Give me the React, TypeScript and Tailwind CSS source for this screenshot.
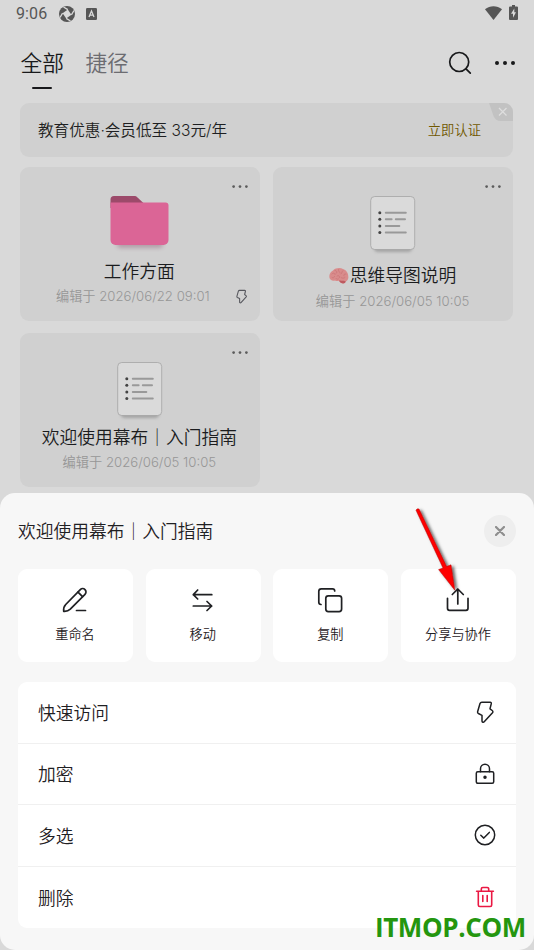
import React from "react";

interface IDoc {
  title: string;
  date: string;
  type: "folder" | "doc";
  emoji?: boolean;
  pinned?: boolean;
}

const docs: IDoc[] = [
  { title: "工作方面", date: "2026/06/22 09:01", type: "folder", pinned: true },
  {
    title: "思维导图说明",
    date: "2026/06/05 10:05",
    type: "doc",
    emoji: true,
  },
  { title: "欢迎使用幕布｜入门指南", date: "2026/06/05 10:05", type: "doc" },
];

const BoltIcon = ({ className }: { className: string }) => (
  <svg
    className={className}
    viewBox="0 0 24 24"
    fill="none"
    stroke="currentColor"
    strokeLinejoin="round"
  >
    <path d="M8.800 2.200h8.400c.8 0 1.300.6 1.100 1.400L17 8.800l2.200 1.700c.8.6.9 1.500.3 2.200L11.200 21.800c-.8.9-2.200.4-2.200-.8v-5.700l-3.600-1.800c-.7-.4-1-1-.8-1.800L7 3.500c.3-.8.9-1.300 1.800-1.300z" />
  </svg>
);

const Dots = ({ className, r = 2 }: { className: string; r?: number }) => (
  <svg className={className} viewBox="0 0 20 4" fill="currentColor">
    <circle cx="2" cy="2" r={r} />
    <circle cx="10" cy="2" r={r} />
    <circle cx="18" cy="2" r={r} />
  </svg>
);

const FolderIcon = () => (
  <svg className="w-[60px] h-[56px]" viewBox="0 0 60 56">
    <defs>
      <filter id="folderShadow" x="-20%" y="-20%" width="140%" height="150%">
        <feGaussianBlur stdDeviation="2.2" />
      </filter>
    </defs>
    <rect
      x="7"
      y="38"
      width="46"
      height="14"
      rx="4"
      fill="#8d6076"
      opacity=".45"
      filter="url(#folderShadow)"
    />
    <path
      d="M.5 12V3.500A3.500 3.500 0 0 1 4 0H24c1.500 0 2.500.5 3.500 1.400L35 8.500V12z"
      fill="#9c4a6a"
    />
    <path
      d="M.5 6.500h55a3 3 0 0 1 3 3V44a5 5 0 0 1-5 5h-48a5 5 0 0 1-5-5z"
      fill="#db6596"
    />
  </svg>
);

const DocIcon = () => (
  <svg className="w-[56px] h-[62px]" viewBox="0 0 56 62">
    <defs>
      <filter id="docShadow" x="-20%" y="-60%" width="140%" height="240%">
        <feGaussianBlur stdDeviation="1.8" />
      </filter>
    </defs>
    <rect
      x="9"
      y="43"
      width="38"
      height="13"
      rx="4"
      fill="#777"
      opacity=".5"
      filter="url(#docShadow)"
    />
    <rect
      x="5.700"
      y=".5"
      width="44"
      height="53"
      rx="4"
      fill="#dadada"
      stroke="#a3a3a3"
      strokeWidth=".8"
    />
    <g fill="#444">
      <circle cx="14.800" cy="16.700" r="1.500" />
      <circle cx="14.800" cy="23.300" r="1.500" />
      <circle cx="14.800" cy="29.900" r="1.500" />
      <circle cx="14.800" cy="36.500" r="1.500" />
    </g>
    <g stroke="#999" strokeWidth="2" strokeLinecap="round">
      <path d="M20.800 16.700h20M20.800 23.300h5.800M30.800 23.300h9.200M20.800 29.900h13.500M20.800 36.500h20" />
    </g>
  </svg>
);

const BrainIcon = () => (
  <svg className="w-[20px] h-[18px] mr-px" viewBox="0 0 20 18" fill="none">
    <path
      d="M.4 10.500C0 7 2 4.500 4 3.500 6.500 1 11 .4 14 2c3 1 5.300 4 5.300 7.200.5 2.500-.8 4.600-2.500 5.300-.5 1.800-2.600 2.500-4.500 1.500-1-.4-1.800-1.400-2.300-2.300-1.500.5-3 .4-4-.3-2.500.8-5.300-.5-5.600-2.900z"
      fill="#d98c8c"
    />
    <path
      d="M10 13.600c2 .3 4.500-.3 6.800.9-.5 1.800-2.600 2.500-4.500 1.500-1-.4-1.800-1.400-2.300-2.400z"
      fill="#bd5a60"
    />
    <path
      d="M3 7c1-1.500 3-1 3 .5M6 3.500c2 0 2.500 2 1 3M9.500 2.500c-.5 2 1.500 2 1.500 3.500M14 3.500c-1.500 1-.5 2.500-2 3.500M17 7c-2-.5-2.500 1-2 2M3 10.500c1 1 2.500 0 2.500-1M8 9c1.500-1 3 0 2.500 1.500M12 10.500c1 1 3 1 4 0M7 11.500c.5 1 2 1 2.500.5"
      stroke="#c97174"
      strokeWidth=".7"
      strokeLinecap="round"
    />
  </svg>
);

const DocCard = ({ doc }: { doc: IDoc }) => (
  <div className="relative h-[153.500px] rounded-[9px] bg-[#d0d0d0] pt-[29px] flex flex-col items-center">
    <Dots
      r={1.700}
      className="absolute top-[18px] right-[12px] w-[16px] h-[3.200px] text-[#5c5c5c]"
    />
    <div className={doc.emoji ? "h-[68px]" : "h-[64px]"}>
      {doc.type === "folder" ? <FolderIcon /> : <DocIcon />}
    </div>
    <div className="flex items-center h-[24px] pr-px text-[17.750px] leading-[24px] text-[#1b1c1e] whitespace-nowrap">
      {doc.emoji && <BrainIcon />}
      {doc.title}
    </div>
    <div
      className={`text-[13.200px] leading-[20px] text-[#979797] whitespace-nowrap ${
        doc.emoji ? "mt-[3px]" : "mt-[2px]"
      } ${doc.pinned ? "mr-[14px]" : "mr-px"}`}
    >
      编辑于 {doc.date}
    </div>
    {doc.pinned && (
      <BoltIcon className="absolute bottom-[17px] right-[11px] w-[15px] h-[15px] text-[#55565c] stroke-[1.700]" />
    )}
  </div>
);

const iconProps = {
  fill: "none",
  stroke: "currentColor",
  strokeWidth: 1.7,
  strokeLinecap: "round" as const,
  strokeLinejoin: "round" as const,
};

const actions = [
  {
    label: "重命名",
    icon: (
      <svg className="w-[28px] h-[28px]" viewBox="0 0 28 28" {...iconProps}>
        <path d="M2.700 25.300c-.3-2.500.3-5 2-6.800L19.300 3.600a3.300 3.300 0 0 1 4.700 4.700L9.300 23.200c-1.800 1.700-4.100 2.300-6.600 2.100z" />
        <path d="M17 6.200l4.500 4.500M15.500 24.500h9" />
      </svg>
    ),
  },
  {
    label: "移动",
    icon: (
      <svg className="w-[28px] h-[28px]" viewBox="0 0 28 28" {...iconProps}>
        <path d="M8.700 4L4.300 8.700l4.400 4.300M4.300 8.700h18.500M18 15.500l4.700 4.500-4.700 4.500M22.700 20H4.300" />
      </svg>
    ),
  },
  {
    label: "复制",
    icon: (
      <svg className="w-[28px] h-[28px]" viewBox="0 0 28 28" {...iconProps}>
        <rect x="9.800" y="9.800" width="15.800" height="15.800" rx="2.500" />
        <path d="M5 18.500c-1.300 0-2.200-.8-2.200-2.200v-11A2.500 2.500 0 0 1 5.300 2.800h11.200c1.300 0 2.200.8 2.200 2.200" />
      </svg>
    ),
  },
  {
    label: "分享与协作",
    icon: (
      <svg className="w-[28px] h-[28px]" viewBox="0 0 28 28" {...iconProps}>
        <path d="M3.500 12.300v10a2 2 0 0 0 2 2H22a2 2 0 0 0 2-2v-10M13.800 18V3M8.300 8.500L13.800 3l5.500 5.500" />
      </svg>
    ),
  },
];

const rows = [
  {
    label: "快速访问",
    icon: <BoltIcon className="w-[24px] h-[24px] stroke-[1.500]" />,
  },
  {
    label: "加密",
    icon: (
      <svg
        className="w-[24px] h-[24px]"
        viewBox="0 0 24 24"
        {...iconProps}
        strokeWidth={1.5}
      >
        <rect x="3.300" y="9.800" width="17.400" height="11.500" rx="1.500" />
        <path d="M7.500 9.800V6.800a4.500 4.500 0 0 1 9 0v3" />
        <circle cx="12" cy="15.300" r="1" fill="currentColor" />
      </svg>
    ),
  },
  {
    label: "多选",
    icon: (
      <svg
        className="w-[24px] h-[24px]"
        viewBox="0 0 24 24"
        {...iconProps}
        strokeWidth={1.5}
      >
        <circle cx="12" cy="12" r="9.700" />
        <path d="M7.800 12.300l3 2.800 5.500-5.700" />
      </svg>
    ),
  },
  {
    label: "删除",
    icon: (
      <svg
        className="w-[24px] h-[24px] text-[#ea1843]"
        viewBox="0 0 24 24"
        {...iconProps}
        strokeWidth={1.6}
      >
        <path d="M3.600 6.200h16.800M5.300 6.200V20a1.500 1.500 0 0 0 1.500 1.500h10.400a1.500 1.500 0 0 0 1.500-1.500V6.200M8.300 6V4a1.500 1.500 0 0 1 1.500-1.500h4.400A1.500 1.500 0 0 1 15.700 4v2M9.800 10.500v6M14.200 10.500v6" />
      </svg>
    ),
  },
];

const StatusBar = () => (
  <div className="flex items-center h-[28px] pl-[16px] pr-[16px] text-[#565656]">
    <span className="font-['Roboto'] font-normal text-[16px] leading-[28px] tracking-[.1px]">
      9:06
    </span>
    <svg className="w-[16px] h-[16px] ml-[12px]" viewBox="0 0 16 16">
      <circle cx="8" cy="8" r="8" fill="currentColor" />
      <path d="M8.800 3.600l3.600 5.200-5.200 3.600L3.600 7.200z" fill="#d9d9d9" />
      <path
        d="M8.800 3.600L4.500 1M12.400 8.800L15 4.500M7.200 12.400l4.300 2.600M3.600 7.200L1 11.500"
        stroke="#d9d9d9"
        strokeWidth="1.300"
      />
    </svg>
    <svg className="w-[11px] h-[12px] ml-[11px]" viewBox="0 0 11 12">
      <rect width="11" height="12" rx="1.300" fill="currentColor" />
      <path
        d="M3 9l2.500-6L8 9M4 7.200h3"
        fill="none"
        stroke="#d9d9d9"
        strokeWidth="1.300"
      />
    </svg>
    <svg className="w-[17px] h-[15px] ml-auto -mt-[2px]" viewBox="0 0 17 15">
      <path d="M0 3.200C5-.8 12-.8 17 3.200L8.500 14z" fill="currentColor" />
    </svg>
    <svg className="w-[9px] h-[15px] ml-[7.500px] -mt-[3px]" viewBox="0 0 9 15">
      <path
        d="M3 0h3v1.500h2a1 1 0 0 1 1 1V14a1 1 0 0 1-1 1H1a1 1 0 0 1-1-1V2.500a1 1 0 0 1 1-1h2z"
        fill="currentColor"
      />
      <path d="M5.300 3.500L2 8.800h2v4l3-5.500H5.300z" fill="#d9d9d9" />
    </svg>
  </div>
);

const App = () => {
  return (
    <div className="relative w-[534px] h-[950px] overflow-hidden bg-[#d9d9d9] font-['Inter','Noto_Sans_CJK_SC',sans-serif] font-[350] flex flex-col">
      <StatusBar />

      <div className="h-[75px] pl-[20.500px] pr-[19.500px] flex items-start">
        <div className="flex flex-col items-center pt-[19px]">
          <span className="text-[21.700px] leading-[32px] text-[#18191b]">
            全部
          </span>
          <span className="w-[20px] h-[2px] mt-[8px] bg-[#18191b] rounded-full" />
        </div>
        <span className="ml-[21.500px] pt-[19px] text-[21.700px] leading-[32px] text-[#6c6c71]">
          捷径
        </span>
        <svg
          className="w-[24px] h-[24px] ml-auto mt-[23px] text-[#18191b]"
          viewBox="0 0 24 24"
          {...iconProps}
        >
          <circle cx="11.200" cy="11" r="9.500" />
          <path d="M18 17.800l4.300 4.300" />
        </svg>
        <Dots className="w-[20px] h-[4px] mt-[33px] ml-[23px] text-[#18191b]" />
      </div>

      <div className="relative mx-[20px] mr-[21px] h-[54px] shrink-0 overflow-hidden rounded-[9px] bg-[#d0d0d0] flex items-center justify-between pl-[18px] pr-[32px]">
        <span className="pt-[2px] text-[15.600px] text-[#1e1f22]">
          教育优惠·会员低至 33元/年
        </span>
        <span className="pt-px text-[13.300px] text-[#705800]">立即认证</span>
        <svg
          className="absolute top-0 right-0 w-[24px] h-[18px]"
          viewBox="0 0 24 18"
        >
          <path d="M0 0h24v18H12c-4 0-6.300-2-7.500-5z" fill="#c2c2c2" />
          <path
            d="M10 5l7.500 7.500M17.500 5L10 12.500"
            stroke="#dedede"
            strokeWidth="1.200"
          />
        </svg>
      </div>

      <div className="ml-[20px] mr-[21px] mt-[10px] grid grid-cols-2 gap-x-[13.500px] gap-y-[12.500px]">
        {docs.map((doc) => (
          <DocCard key={doc.title} doc={doc} />
        ))}
      </div>

      {/* action sheet */}
      <div className="mt-[6.500px] h-[457px] shrink-0 rounded-[15px] bg-[#f7f7f7] pl-[18px] pr-[18px] pt-[22px]">
        <div className="flex items-center justify-between h-[32px]">
          <span className="pt-[3px] text-[17.750px] text-[#1f2023]">
            欢迎使用幕布｜入门指南
          </span>
          <button className="w-[32px] h-[32px] rounded-full bg-[#eeeeee] flex items-center justify-center text-[#8e8e8e]">
            <svg
              className="w-[10px] h-[10px]"
              viewBox="0 0 10 10"
              stroke="currentColor"
              strokeWidth="2.200"
              strokeLinecap="round"
            >
              <path d="M1 1l8 8M9 1l-8 8" />
            </svg>
          </button>
        </div>

        <div className="mt-[22px] grid grid-cols-4 gap-[12.700px]">
          {actions.map((action) => (
            <button
              key={action.label}
              className="h-[93px] rounded-[9px] bg-white pt-[17px] pr-px flex flex-col items-center text-[#1f2023]"
            >
              {action.icon}
              <span className="mt-[10px] text-[13.200px] leading-[20px] text-[#1f2023]">
                {action.label}
              </span>
            </button>
          ))}
        </div>

        <div className="mt-[20px] rounded-[9px] bg-white overflow-hidden">
          {rows.map((row) => (
            <div
              key={row.label}
              className="h-[61.500px] pl-[20px] pr-[19px] flex items-center justify-between text-[17.750px] text-[#1f2023] border-b border-[#f0f0f0] last:border-b-0"
            >
              <span className="pt-[4px]">{row.label}</span>
              {row.icon}
            </div>
          ))}
        </div>
      </div>

      {/* red pointer over the share button */}
      <svg
        className="absolute left-[408px] top-[500px] w-[64px] h-[100px]"
        viewBox="0 0 64 100"
      >
        <defs>
          <filter id="arrowShadow" x="-30%" y="-30%" width="180%" height="160%">
            <feDropShadow
              dx="2.500"
              dy="1.500"
              stdDeviation="1.600"
              floodColor="#000"
              floodOpacity=".6"
            />
          </filter>
        </defs>
        <g filter="url(#arrowShadow)" fill="#fe0000" stroke="#b01010" strokeWidth=".5">
          <path d="M8 10.200Q8.800 8.300 11 9L38.600 66.600 43 64.800 46.800 90.200 30.600 69.600 35 68z" />
        </g>
      </svg>

      <span className="absolute left-[375px] top-[909px] font-['Open_Sans'] font-bold text-[26px] leading-[36px] tracking-[-.4px] text-[#24960f] whitespace-nowrap">
        ITMOP.COM
      </span>
    </div>
  );
};

export default App;
